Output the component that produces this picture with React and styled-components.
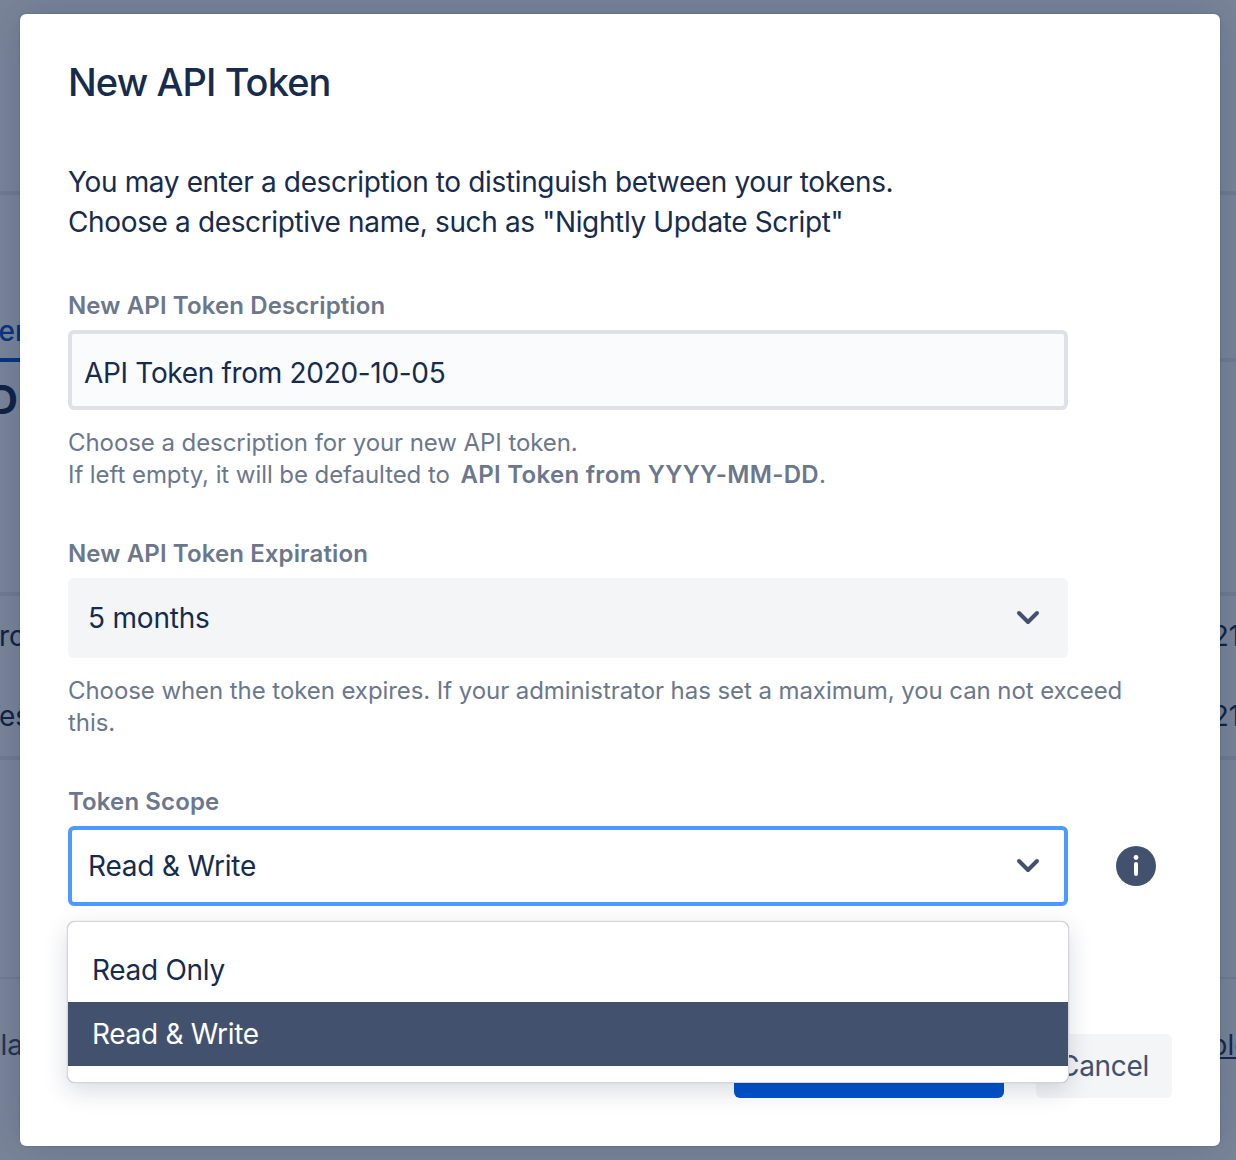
import React from "react";
import styled, { createGlobalStyle } from "styled-components";

const Global = createGlobalStyle`
  html, body { margin: 0; padding: 0; height: 1160px; overflow: hidden; background: #fff; }
  body { font-family: Inter, "Liberation Sans", sans-serif; color: #172b4d; }
  * { box-sizing: border-box; }
`;

const Page = styled.div`
  position: relative;
  width: 1236px;
  height: 1160px;
  overflow: hidden;
  background: #fff;
`;

const BackSection = styled.div`
  height: ${(p) => p.$h}px;
  border-bottom: ${(p) => p.$line ?? 4}px solid #ebecf0;
  display: flex;
  align-items: flex-end;
`;

const BackTab = styled.span`
  flex: none;
  margin-left: -63px;
  margin-bottom: -4px;
  padding-bottom: 7px;
  border-bottom: 4px solid #0052cc;
  font-size: 28px;
  line-height: 40px;
  font-weight: 500;
  color: #0052cc;
  white-space: nowrap;
`;

const BackHeading = styled.h2`
  margin: 14px 0 0 -11px;
  font-size: 40px;
  line-height: 48px;
  font-weight: 700;
  color: #172b4d;
`;

const BackHeadingSection = styled.div`
  height: 234px;
  border-bottom: 4px solid #ebecf0;
  overflow: hidden;
`;

const BackRow = styled.div`
  height: 80px;
  display: flex;
  justify-content: space-between;
  align-items: center;
  font-size: 28px;
  line-height: 40px;
  color: #172b4d;
  white-space: nowrap;
`;

const BackName = styled.span`
  flex: none;
  margin-left: ${(p) => p.$offset}px;
`;

const BackDate = styled.span`
  flex: none;
  width: 150px;
  margin-right: -91px;
`;

const BackFooter = styled.div`
  padding-top: 46px;
  display: flex;
  justify-content: space-between;
  font-size: 28px;
  line-height: 40px;
  color: #42526e;
  white-space: nowrap;
`;

const BackLink = styled.a`
  flex: none;
  width: 112px;
  margin-right: -14px;
  color: #253858;
  text-decoration: underline;
`;

const Overlay = styled.div`
  position: absolute;
  inset: 0;
  background: rgba(9, 30, 66, 0.54);
  display: flex;
  align-items: flex-start;
  justify-content: flex-start;
  padding: 14px 0 0 20px;
`;

const Dialog = styled.div`
  position: relative;
  flex: none;
  width: 1200px;
  height: 1132px;
  background: #fff;
  border-radius: 6px;
  box-shadow: 0 0 2px rgba(9, 30, 66, 0.31), 0 0 40px rgba(9, 30, 66, 0.2);
  padding: 48px;
  display: flex;
  flex-direction: column;
`;

const Title = styled.h1`
  margin: 0 0 60px;
  font-size: 38px;
  line-height: 40px;
  font-weight: 500;
  letter-spacing: -0.9px;
  color: #172b4d;
`;

const Intro = styled.p`
  margin: 0 0 48px;
  font-size: 28px;
  line-height: 40px;
  letter-spacing: -0.36px;
  color: #172b4d;
`;

const Field = styled.div`
  margin-bottom: ${(p) => p.$mb ?? 47}px;
`;

const Label = styled.label`
  display: block;
  font-size: 24px;
  line-height: 32px;
  font-weight: 600;
  letter-spacing: 0.12px;
  color: #6b778c;
  margin-bottom: 8px;
`;

const TextBox = styled.div`
  width: 1000px;
  height: 80px;
  background: #fafbfc;
  border: 4px solid #dfe1e6;
  border-radius: 6px;
  padding: 6px 12px 0;
  display: flex;
  align-items: center;
  font-size: 28px;
  letter-spacing: -0.32px;
  color: #172b4d;
`;

const Help = styled.p`
  margin: 17px 0 0;
  font-size: 24px;
  line-height: 32px;
  color: #6b778c;
  letter-spacing: -0.07px;
  strong { font-weight: 600; letter-spacing: 0.3px; margin-left: 4px; }
`;

const SelectRow = styled.div`
  display: flex;
  align-items: center;
  gap: 48px;
`;

const Select = styled.div`
  width: 1000px;
  height: 80px;
  border-radius: 6px;
  display: flex;
  align-items: center;
  justify-content: space-between;
  font-size: 28px;
  letter-spacing: -0.2px;
  color: #172b4d;
  background: ${(p) => (p.$focused ? "#fff" : "#f4f5f7")};
  border: ${(p) => (p.$focused ? "4px solid #4c9aff" : "none")};
  padding-left: ${(p) => (p.$focused ? 16 : 20)}px;
  padding-right: ${(p) => (p.$focused ? 20 : 24)}px;
`;

const Chevron = () => (
  <svg width="32" height="32" viewBox="0 0 32 32" fill="none">
    <path d="M7 11 L16 20 L25 11" stroke="#42526e" strokeWidth="4" strokeLinecap="round" strokeLinejoin="round" />
  </svg>
);

const InfoIcon = () => (
  <svg width="40" height="40" viewBox="0 0 40 40">
    <circle cx="20" cy="20" r="20" fill="#42526e" />
    <rect x="18" y="16" width="4" height="14" rx="2" fill="#fff" />
    <circle cx="20" cy="11.5" r="2.4" fill="#fff" />
  </svg>
);

const Menu = styled.div`
  position: absolute;
  left: 47px;
  top: 907px;
  width: 1002px;
  height: 162px;
  background: #fff;
  border: 1px solid #d5d6d9;
  border-radius: 8px;
  box-shadow: 0 0 1px rgba(9, 30, 66, 0.3), 0 8px 24px rgba(9, 30, 66, 0.16);
  padding-top: 16px;
  overflow: hidden;
  z-index: 2;
`;

const Option = styled.div`
  height: 64px;
  padding: 0 24px;
  display: flex;
  align-items: center;
  font-size: 28px;
  letter-spacing: -0.3px;
  color: ${(p) => (p.$selected ? "#fff" : "#172b4d")};
  background: ${(p) => (p.$selected ? "#42526e" : "transparent")};
`;

const Footer = styled.div`
  position: absolute;
  right: 48px;
  bottom: 48px;
  display: flex;
  gap: 32px;
`;

const Primary = styled.button`
  width: 270px;
  height: 64px;
  border: 0;
  border-radius: 6px;
  background: #0052cc;
  color: #fff;
  font: 500 28px Inter, sans-serif;
`;

const Secondary = styled.button`
  width: 136px;
  height: 64px;
  border: 0;
  border-radius: 6px;
  background: #f4f5f7;
  color: #42526e;
  font: 400 28px Inter, sans-serif;
  letter-spacing: -0.3px;
`;

export default function App() {
  return (
    <Page>
      <Global />
      <BackSection $h={195} />
      <BackSection $h={167}><BackTab>Owner</BackTab></BackSection>
      <BackHeadingSection><BackHeading>D</BackHeading></BackHeadingSection>
      <BackRow><BackName $offset={-19}>Pro</BackName><BackDate>2021-10-05</BackDate></BackRow>
      <BackRow><BackName $offset={-17}>Test</BackName><BackDate>2021-10-05</BackDate></BackRow>
      <BackSection $h={4} />
      <BackSection $h={219} $line={2} />
      <BackFooter>
        <BackName $offset={-20}>Class</BackName>
        <BackLink>Example</BackLink>
      </BackFooter>
      <Overlay>
        <Dialog>
          <Title>New API Token</Title>
          <Intro>
            You may enter a description to distinguish between your tokens.<br />
            Choose a descriptive name, such as "Nightly Update Script"
          </Intro>
          <Field>
            <Label>New API Token Description</Label>
            <TextBox>API Token from 2020-10-05</TextBox>
            <Help>
              Choose a description for your new API token.<br />
              If left empty, it will be defaulted to <strong>API Token from YYYY-MM-DD</strong>.
            </Help>
          </Field>
          <Field>
            <Label>New API Token Expiration</Label>
            <Select>5 months<Chevron /></Select>
            <Help>Choose when the token expires. If your administrator has set a maximum, you can not exceed this.</Help>
          </Field>
          <Field $mb={0}>
            <Label>Token Scope</Label>
            <SelectRow>
              <Select $focused>Read &amp; Write<Chevron /></Select>
              <InfoIcon />
            </SelectRow>
          </Field>
          <Footer>
            <Primary>Create API Token</Primary>
            <Secondary>Cancel</Secondary>
          </Footer>
          <Menu>
            <Option>Read Only</Option>
            <Option $selected>Read &amp; Write</Option>
          </Menu>
        </Dialog>
      </Overlay>
    </Page>
  );
}
